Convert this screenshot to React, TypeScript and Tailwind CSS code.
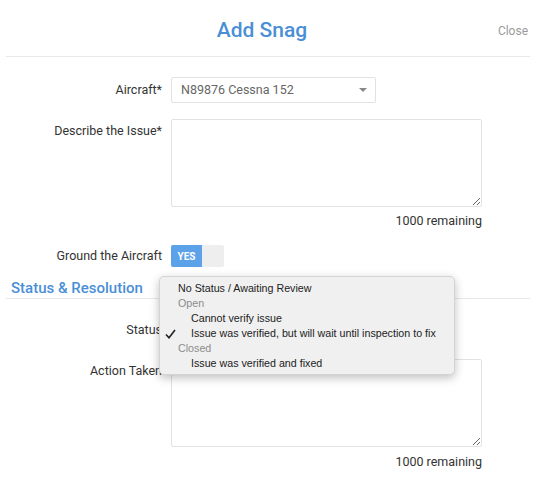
import React from "react";

type Option = {
  label: string;
  group?: boolean;
  indent?: boolean;
  checked?: boolean;
};

const statusOptions: Option[] = [
  { label: "No Status / Awaiting Review" },
  { label: "Open", group: true },
  { label: "Cannot verify issue", indent: true },
  { label: "Issue was verified, but will wait until inspection to fix", indent: true, checked: true },
  { label: "Closed", group: true },
  { label: "Issue was verified and fixed", indent: true },
];

function Label({ text, top }: { text: string; top?: boolean }) {
  return (
    <div
      className={
        top
          ? "pt-[4px] text-right text-[12.5px] leading-[16px] text-[#333]"
          : "flex h-[26px] items-center justify-end text-[12.5px] text-[#333]"
      }
    >
      {text}
    </div>
  );
}

function Remaining({ className }: { className: string }) {
  return (
    <>
      <div />
      <div className={"w-[311px] text-right text-[12.5px] leading-[16px] text-[#333] " + className}>
        1000 remaining
      </div>
    </>
  );
}

export default function App() {
  return (
    <div className="relative min-h-[499px] bg-white px-[6px] font-['Roboto',sans-serif]">
      <div className="flex h-[57px] items-center border-b border-[#e8e8e8] pt-[6px]">
        <div className="flex-1" />
        <h1 className="mr-[10px] text-[21px] font-medium text-[#4a8fd6]">Add Snag</h1>
        <div className="flex flex-1 justify-end pr-[2px]">
          <button className="text-[12px] text-[#9a9a9a]">Close</button>
        </div>
      </div>

      <div className="mt-[20px] grid grid-cols-[156px_1fr] gap-x-[9px]">
        <Label text="Aircraft*" />
        <div className="flex h-[26px] w-[205px] items-center justify-between rounded-[2px] border border-[#e2e2e2] pl-[9px] pr-[8px] text-[12.5px] text-[#666]">
          <span>N89876 Cessna 152</span>
          <span className="h-0 w-0 border-x-[4px] border-t-[4px] border-x-transparent border-t-[#888]" />
        </div>

        <div className="col-span-2 h-[16px]" />
        <Label text="Describe the Issue*" top />
        <textarea className="block h-[88px] w-[311px] rounded-[2px] border border-[#e2e2e2] outline-none" />
        <Remaining className="mt-[6px]" />

        <div className="col-span-2 h-[16px]" />
        <div className="flex h-[22px] items-center justify-end text-[12.5px] text-[#333]">Ground the Aircraft</div>
        <div className="flex h-[22px] w-[53px] rounded-[2px] bg-[#eeeeee]">
          <div className="flex w-[31px] items-center justify-center rounded-l-[2px] bg-[#5ba2e9] text-[10px] font-bold text-white">
            YES
          </div>
        </div>
      </div>

      <div className="mt-[11px] border-b border-[#e8e8e8] pl-[5px] text-[15px] font-medium leading-[20px] text-[#4a8fd6]">
        Status &amp; Resolution
      </div>

      <div className="mt-[18px] grid grid-cols-[156px_1fr] gap-x-[9px]">
        <Label text="Status" />
        {/* the closed select sits under the open menu */}
        <div className="h-[26px] w-[205px] rounded-[2px] border border-[#e2e2e2]" />

        <div className="col-span-2 h-[16px]" />
        <Label text="Action Taken" top />
        <textarea className="block h-[88px] w-[311px] rounded-[2px] border border-[#e2e2e2] outline-none" />
        <Remaining className="mt-[7px]" />
      </div>

      <div className="absolute left-[159px] top-[276px] h-[99px] w-[296px] rounded-[5px] border border-[#d4d4d4] bg-[#f0f0f0] pt-[4px] font-['Liberation_Sans',Arial,sans-serif] text-[10.7px] leading-[15px] shadow-[0_3px_10px_rgba(0,0,0,0.25)]">
        {statusOptions.map((opt) => (
          <div
            key={opt.label}
            className={
              "relative whitespace-nowrap " +
              (opt.group ? "pl-[18px] text-[#8c8c8c]" : opt.indent ? "pl-[31px] text-[#222]" : "pl-[18px] text-[#222]")
            }
          >
            {opt.checked && (
              <svg
                className="absolute left-[5px] top-[3px]"
                width="11"
                height="10"
                viewBox="0 0 11 10"
                fill="none"
                stroke="#222"
                strokeWidth="1.6"
              >
                <path d="M1 5.5 L4 8.8 L10 1" />
              </svg>
            )}
            {opt.label}
          </div>
        ))}
      </div>
    </div>
  );
}
